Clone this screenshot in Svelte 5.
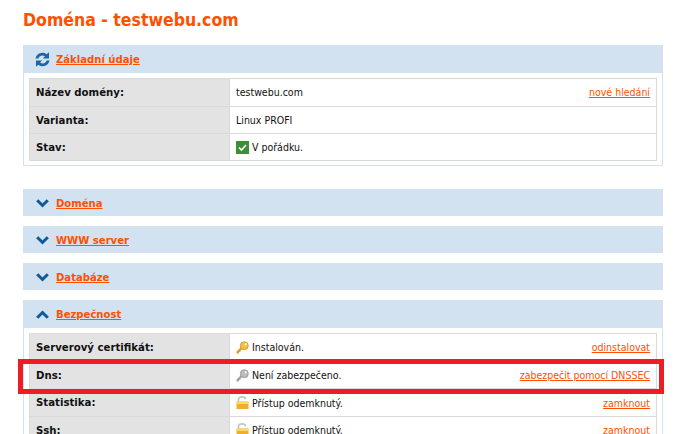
<script>
  const basic = [
    { label: 'Název domény:', value: 'testwebu.com', action: 'nové hledání' },
    { label: 'Varianta:', value: 'Linux PROFI' },
    { label: 'Stav:', value: 'V pořádku.', icon: 'check' }
  ];
  const security = [
    { label: 'Serverový certifikát:', value: 'Instalován.', icon: 'key', action: 'odinstalovat' },
    { label: 'Dns:', value: 'Není zabezpečeno.', icon: 'keygrey', action: 'zabezpečit pomocí DNSSEC' },
    { label: 'Statistika:', value: 'Přístup odemknutý.', icon: 'lock', action: 'zamknout' },
    { label: 'Ssh:', value: 'Přístup odemknutý.', icon: 'lock', action: 'zamknout' }
  ];
</script>

{#snippet rowIcon(name)}
  {#if name === 'check'}
    <svg class="ico" viewBox="0 0 13 13" width="13" height="13">
      <rect width="13" height="13" fill="#3d8f35" />
      <path d="M3 6.500l2.500 2.500L10 4" fill="none" stroke="#fff" stroke-width="1.600" />
    </svg>
  {:else if name === 'key' || name === 'keygrey'}
    <svg class="ico" viewBox="0 0 13 13" width="13" height="13">
      <path d="M5.500 5.500L0.500 10.500V12.500H3V11H4.500V9.500L7 7.500" fill={name === 'key' ? '#dca024' : '#a3a3a3'} />
      <circle cx="8.300" cy="4.700" r="4" fill={name === 'key' ? '#f2c143' : '#bcbcbc'} stroke={name === 'key' ? '#cf951d' : '#929292'} stroke-width="0.800" />
      <circle cx="9.700" cy="3.300" r="1.100" fill="#fff" />
    </svg>
  {:else}
    <svg class="ico" viewBox="0 0 13 13" width="13" height="13">
      <path d="M2.500 6V3.500C2.500 1.800 4 0.900 6 0.900S9.500 1.800 9.500 3.200" fill="none" stroke="#c6c6c6" stroke-width="1.800" />
      <rect x="0.500" y="5.500" width="12" height="7.500" rx="0.500" fill="#eeb02a" />
      <rect x="0.500" y="5.500" width="12" height="2.500" fill="#fbd96e" />
    </svg>
  {/if}
{/snippet}

{#snippet head(title, icon, open)}
  <div class="head" class:open>
    {#if icon === 'refresh'}
      <svg class="head-ico" viewBox="0 0 15 15" width="15" height="15">
        <path d="M0.500 6.500A7 7 0 0 1 11.700 2.200L14 0.200V6.500H7.800L9.900 4.400A4.200 4.200 0 0 0 3.300 6.500z" fill="#1a66a8" />
        <path d="M14.500 8.500A7 7 0 0 1 3.300 12.800L1 14.800V8.500H7.200L5.100 10.600A4.200 4.200 0 0 0 11.700 8.500z" fill="#1a66a8" />
      </svg>
    {:else if icon === 'up'}
      <svg class="head-ico" viewBox="0 0 15 9" width="15" height="9">
        <path d="M2.200 7.800L7.500 2.500l5.300 5.300" fill="none" stroke="#105a9c" stroke-width="3" />
      </svg>
    {:else}
      <svg class="head-ico" viewBox="0 0 15 9" width="15" height="9">
        <path d="M2.200 1.200L7.500 6.500l5.300-5.300" fill="none" stroke="#105a9c" stroke-width="3" />
      </svg>
    {/if}
    <a href="#top">{title}</a>
  </div>
{/snippet}

{#snippet table(rows)}
  <div class="table">
    {#each rows as row}
      <div class="row">
        <div class="label">{row.label}</div>
        <div class="value">
          {#if row.icon}{@render rowIcon(row.icon)}{/if}
          <span>{row.value}</span>
          {#if row.action}<a class="action" href="#top">{row.action}</a>{/if}
        </div>
      </div>
    {/each}
  </div>
{/snippet}

<div class="page">
  <h1>Doména - testwebu.com</h1>

  <section class="first">
    {@render head('Základní údaje', 'refresh', true)}
    <div class="body">{@render table(basic)}</div>
  </section>

  <section class="gap">{@render head('Doména', 'down', false)}</section>
  <section>{@render head('WWW server', 'down', false)}</section>
  <section>{@render head('Databáze', 'down', false)}</section>

  <section>
    {@render head('Bezpečnost', 'up', true)}
    <div class="body">{@render table(security)}</div>
  </section>

  <div class="marker"></div>
</div>

<style>
  :global(html), :global(body) {
    margin: 0;
    overflow: hidden;
    background: #fff;
  }

  .page {
    position: relative;
    height: 434px;
    overflow: hidden;
    padding: 0 23px;
    width: 640px;
    font-family: "DejaVu Sans Condensed", "DejaVu Sans", sans-serif;
    font-stretch: condensed;
    font-size: 10.500px;
    color: #111;
  }

  h1 {
    margin: 0;
    padding-top: 9px;
    height: 36px;
    box-sizing: border-box;
    font-size: 17.500px;
    line-height: 22px;
    font-weight: 700;
    color: #ff5000;
  }

  section {
    margin-top: 10px;
  }

  section.first {
    margin-top: 9px;
  }

  section.gap {
    margin-top: 23px;
  }

  .head {
    display: flex;
    align-items: center;
    box-sizing: border-box;
    height: 27px;
    background: #d3e2f0;
    padding: 2px 0 0 12px;
  }

  .head.open {
    height: 28px;
    padding-top: 1px;
  }

  .head-ico {
    margin-right: 6px;
    flex: none;
  }

  .head a {
    font-weight: 700;
    color: #ff5000;
    font-size: 11.200px;
  }

  .body {
    border: 1px solid #d3e2f0;
    border-top: 0;
    padding: 5px 5px 4px;
  }

  .table {
    border: 1px solid #dadada;
  }

  .row {
    display: flex;
    box-sizing: border-box;
    height: 27.600px;
    border-bottom: 1px solid #dadada;
  }

  .row:last-child {
    height: 26px;
    border-bottom: 0;
  }

  .label {
    width: 193px;
    padding-left: 6px;
    background: #e3e3e3;
    border-right: 1px solid #dadada;
    font-size: 11.300px;
    font-weight: 700;
    line-height: 27px;
    flex: none;
  }

  .value {
    flex: 1;
    display: flex;
    align-items: center;
    gap: 3px;
    padding: 0 6px 0 6px;
  }

  .ico {
    flex: none;
  }

  .action {
    margin-left: auto;
    color: #ff5000;
  }

  .marker {
    position: absolute;
    left: 18px;
    top: 359px;
    width: 636px;
    height: 25px;
    border: 5px solid #ee1c25;
  }
</style>
